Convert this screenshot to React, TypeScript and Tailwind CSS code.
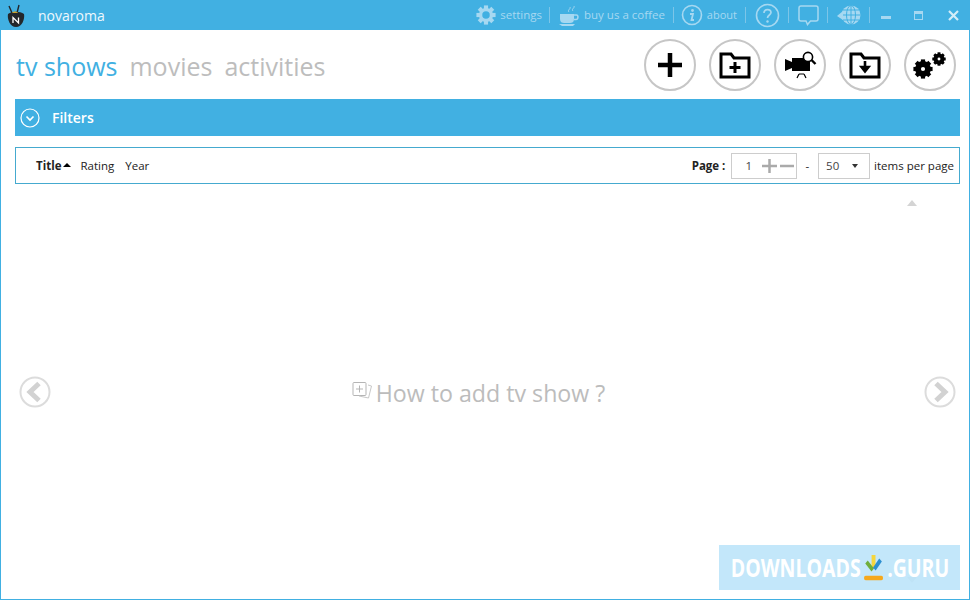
import React from "react";

const font = { fontFamily: '"Open Sans", "Noto Sans", sans-serif' };

const Sep = () => <div className="w-px h-[16px] bg-[#7cc5e8]" />;

const Logo = () => (
	<svg width="20" height="24" viewBox="0 0 20 24">
		<path d="M6 9 L3 2 M11 9 L13 1" stroke="#23272b" strokeWidth="1.4" fill="none" />
		<path d="M2 10 C6 7 14 7 18 10 C19 15 16 23 10 23 C4 23 1 15 2 10 Z" fill="#23272b" />
		<path d="M6 9 C7 7 11 7 12 9 Z" fill="#c7a12e" />
		<path d="M7 19 V13.5 L12.5 19 V13.5" stroke="#fff" strokeWidth="1.3" fill="none" />
	</svg>
);

const Gear = ({ size, color, solid }: { size: number; color: string; solid?: boolean }) => (
	<svg width={size} height={size} viewBox="0 0 24 24">
		<circle cx="12" cy="12" r={solid ? 6 : 6.5} fill="none" stroke={color} strokeWidth={solid ? 7 : 4} />
		{[0, 45, 90, 135, 180, 225, 270, 315].map((a) => (
			<rect key={a} x="9.5" y="0.5" width="5" height="5" fill={color} transform={`rotate(${a} 12 12)`} />
		))}
	</svg>
);

const Coffee = () => (
	<svg width="22" height="24" viewBox="0 0 22 24" fill="none">
		<path d="M1 11 H15 V16 C15 19 13 20 11 20 H5 C3 20 1 19 1 16 Z" fill="#a6d8f1" />
		<path d="M15 12 H17.5 C19.5 12 19.5 16.5 17 16.5 H15" stroke="#a6d8f1" strokeWidth="1.5" />
		<path d="M0 21 H16 L14 23 H3 Z" fill="#a6d8f1" />
		<path d="M10 9 C8 7 12 6 11 4 M14 8 C12 6 16 5 15 3" stroke="#a6d8f1" strokeWidth="1" />
	</svg>
);

const Info = () => (
	<svg width="22" height="22" viewBox="0 0 22 22" fill="none">
		<circle cx="11" cy="11" r="9.5" stroke="#a6d8f1" strokeWidth="1.6" />
		<circle cx="11.5" cy="6.5" r="1.4" fill="#a6d8f1" />
		<path d="M9 10 H12 L10.5 16 H13" stroke="#a6d8f1" strokeWidth="1.8" />
	</svg>
);

const Question = () => (
	<svg width="25" height="25" viewBox="0 0 25 25" fill="none">
		<circle cx="12.5" cy="12.5" r="11" stroke="#a6d8f1" strokeWidth="1.6" />
		<path d="M9 10 C9 5.5 16 5.5 16 9.5 C16 12 12.5 12 12.5 15" stroke="#a6d8f1" strokeWidth="1.7" />
		<circle cx="12.5" cy="18.5" r="1.2" fill="#a6d8f1" />
	</svg>
);

const Chat = () => (
	<svg width="21" height="21" viewBox="0 0 21 21" fill="none">
		<path d="M3 1 H18 C19.2 1 20 1.8 20 3 V14 C20 15.2 19.2 16 18 16 H12.5 L9.5 19.5 L8 16 H3 C1.8 16 1 15.2 1 14 V3 C1 1.8 1.8 1 3 1 Z" stroke="#a6d8f1" strokeWidth="1.5" />
	</svg>
);

const Globe = () => (
	<svg width="24" height="22" viewBox="0 0 24 22" fill="none">
		<circle cx="14" cy="11" r="9.5" fill="#a6d8f1" />
		<path d="M14 1.5 V20.5 M4.5 11 H23.5 M6 6 H22 M6 16 H22" stroke="#41b0e2" strokeWidth="1" />
		<ellipse cx="14" cy="11" rx="4.5" ry="9.5" stroke="#41b0e2" strokeWidth="1" />
		<path d="M0 12 L6 7 V16 Z" fill="#a6d8f1" />
	</svg>
);

const CircleBtn = ({ children }: { children: React.ReactNode }) => (
	<div className="w-[52px] h-[52px] rounded-full border-2 border-[#c6c6c6] flex items-center justify-center">
		{children}
	</div>
);

const FolderIcon = ({ arrow }: { arrow?: boolean }) => (
	<svg width="32" height="28" viewBox="0 0 32 28" fill="none">
		<path d="M2 3 H12 L15 7 H30 V26 H2 Z" stroke="#000" strokeWidth="3" />
		{arrow ? (
			<path d="M16 10 V17 M12.5 16 L16 20.5 L19.5 16 Z" stroke="#000" strokeWidth="2.6" fill="#000" />
		) : (
			<path d="M16 11 V22 M10.5 16.5 H21.5" stroke="#000" strokeWidth="3" />
		)}
	</svg>
);

const CameraIcon = () => (
	<svg width="34" height="30" viewBox="0 0 34 30" fill="none">
		<path d="M2 9 L9 12 V18 L2 21 Z" fill="#000" />
		<rect x="9" y="8" width="18" height="13" fill="#000" />
		<circle cx="25" cy="7" r="4.6" fill="#fff" stroke="#000" strokeWidth="1.6" />
		<path d="M28.5 10 L32.5 14" stroke="#000" strokeWidth="2.4" />
		<path d="M16 24 L14 28 M21 24 L23 28 M16 24 H21" stroke="#000" strokeWidth="1.2" />
	</svg>
);

const GearsIcon = () => (
	<div className="flex items-start -ml-[1px]">
		<div className="mt-[7px]">
			<Gear size={20} color="#000" solid />
		</div>
		<div className="-ml-[1px]">
			<Gear size={14} color="#000" solid />
		</div>
	</div>
);

const Arrow = ({ right }: { right?: boolean }) => (
	<svg width="32" height="32" viewBox="0 0 32 32" fill="none">
		<circle cx="16" cy="16" r="14.5" stroke="#dcdcdc" strokeWidth="2" />
		<path d={right ? "M12 7.5 L21 16 L12 24.5" : "M20 7.5 L11 16 L20 24.5"} stroke="#d2d2d2" strokeWidth="5" />
	</svg>
);

export default function App() {
	return (
		<div
			className="relative w-[970px] h-[600px] flex flex-col bg-white border-x border-b border-[#41b0e2] overflow-hidden"
			style={font}
		>
			{/* title bar */}
			<div className="h-[30px] -mx-px flex items-center bg-[#41b0e2] shrink-0">
				<div className="ml-[6px] w-[20px] mt-[1px]">
					<Logo />
				</div>
				<span className="ml-[12px] text-[14px] text-[#eef8fd]">novaroma</span>
				<div className="ml-auto flex items-center text-[11.5px] text-[#a6d8f1]">
					<Gear size={20} color="#a6d8f1" />
					<span className="ml-[4px]">settings</span>
					<div className="ml-[7px] mr-[9px]">
						<Sep />
					</div>
					<Coffee />
					<span className="ml-[3px]">buy us a coffee</span>
					<div className="ml-[8px] mr-[7px]">
						<Sep />
					</div>
					<Info />
					<span className="ml-[4px] text-[11px]">about</span>
					<div className="ml-[8px] mr-[9px]">
						<Sep />
					</div>
					<Question />
					<div className="ml-[8px] mr-[9px]">
						<Sep />
					</div>
					<Chat />
					<div className="ml-[8px] mr-[9px]">
						<Sep />
					</div>
					<Globe />
					<div className="ml-[8px]">
						<Sep />
					</div>
				</div>
				<div className="w-[100px] flex items-center justify-between pl-[11px] pr-[11px] shrink-0">
					<div className="w-[10px] h-[3px] mt-[4px] bg-[#a6d8f1]" />
					<div className="w-[9px] h-[9px] border border-t-[3px] border-[#a6d8f1] -ml-[3px]" />
					<svg width="11" height="11" viewBox="0 0 11 11">
						<path d="M1 1 L10 10 M10 1 L1 10" stroke="#d3ecf8" strokeWidth="2.2" />
					</svg>
				</div>
			</div>

			{/* tabs and actions */}
			<div className="h-[69px] shrink-0 flex items-center pl-[15px] pr-[13px]">
				<div className="flex items-center gap-[12px] text-[25px] text-[#bdbdbd] mt-[4px]">
					<span className="text-[#41b0e2]">tv shows</span>
					<span>movies</span>
					<span>activities</span>
				</div>
				<div className="ml-auto flex items-center gap-[13px] mt-[1px]">
					<CircleBtn>
						<svg width="26" height="26" viewBox="0 0 26 26">
							<path d="M13 1 V25 M1 13 H25" stroke="#000" strokeWidth="4.5" />
						</svg>
					</CircleBtn>
					<CircleBtn>
						<FolderIcon />
					</CircleBtn>
					<CircleBtn>
						<CameraIcon />
					</CircleBtn>
					<CircleBtn>
						<FolderIcon arrow />
					</CircleBtn>
					<CircleBtn>
						<GearsIcon />
					</CircleBtn>
				</div>
			</div>

			{/* filters */}
			<div className="ml-[14px] mr-[9px] h-[37px] shrink-0 flex items-center bg-[#41b0e2]">
				<svg className="ml-[5px]" width="20" height="20" viewBox="0 0 20 20" fill="none">
					<circle cx="10" cy="10" r="9" stroke="#fff" strokeWidth="1.2" />
					<path d="M6.5 8.5 L10 12 L13.5 8.5" stroke="#fff" strokeWidth="1.6" />
				</svg>
				<span className="ml-[12px] text-[14px] font-semibold text-white">Filters</span>
			</div>

			{/* sort and paging */}
			<div className="ml-[14px] mr-[9px] mt-[11px] h-[37px] shrink-0 p-px bg-[#45aacf]">
				<div className="h-full flex items-center bg-white text-[11.5px] text-[#222]">
					<span className="ml-[20px] font-bold">Title</span>
					<span className="ml-[2px] mb-[2px] w-0 h-0 border-x-[4px] border-x-transparent border-b-[4px] border-b-black" />
					<span className="ml-[9px]">Rating</span>
					<span className="ml-[11px]">Year</span>
					<span className="ml-auto font-bold">Page :</span>
					<div className="ml-[6px] w-[66px] h-[26px] flex items-center border border-[#cdcdcd] text-[#444]">
						<span className="ml-[13px]">1</span>
						<svg className="ml-[10px]" width="32" height="14" viewBox="0 0 32 14">
							<path d="M7.5 0 V14 M0 7 H15 M18 7 H32" stroke="#aaaaaa" strokeWidth="2.5" />
						</svg>
					</div>
					<span className="ml-[8px]">-</span>
					<div className="ml-[9px] w-[52px] h-[26px] flex items-center border border-[#cdcdcd] text-[#444]">
						<span className="ml-[7px]">50</span>
						<span className="ml-[13px] w-0 h-0 border-x-[3.5px] border-x-transparent border-t-[4px] border-t-[#333]" />
					</div>
					<span className="ml-[4px] mr-[5px]">items per page</span>
				</div>
			</div>

			{/* list area */}
			<div className="flex-1 flex flex-col">
				<div className="flex justify-end pr-[52px] pt-[16px]">
					<span className="w-0 h-0 border-x-[5px] border-x-transparent border-b-[6px] border-b-[#d4d4d4]" />
				</div>
				<div className="flex-1 flex items-center justify-between pl-[18px] pr-[13px]">
					<Arrow />
					<div className="flex items-center -ml-[18px] mt-[4px] text-[23.2px] text-[#bcbcbc]">
						<svg className="mr-[3px] -mt-[4px]" width="21" height="21" viewBox="0 0 21 21" fill="none">
							<rect x="1" y="1.5" width="13" height="13" rx="1" stroke="#b5b5b5" strokeWidth="1" />
							<path d="M7.5 4.5 V11.5 M4 8 H11" stroke="#b5b5b5" strokeWidth="1" />
							<path d="M16 4 L19.5 5 L16.5 17 L7 15" stroke="#c8c8c8" strokeWidth="1" />
						</svg>
						<span>How to add tv show ?</span>
					</div>
					<Arrow right />
				</div>
				<div className="flex justify-end pr-[52px] pb-[16px]">
					<span className="w-0 h-0 border-x-[5px] border-x-transparent border-t-[6px] border-t-[#d4d4d4]" />
				</div>
			</div>

			{/* watermark */}
			<div className="absolute left-[718px] top-[545px] w-[241px] h-[45px] flex items-center justify-center bg-[#bde4fa]/90 text-[25px] font-bold text-white" style={{ fontFamily: '"Open Sans", sans-serif' }}>
				<span className="scale-x-[0.78] flex items-center whitespace-nowrap">
					DOWNLOADS
					<svg className="mx-[4px]" width="26" height="28" viewBox="0 0 26 28" fill="none">
						<path d="M13 1 V14" stroke="#f5d63d" strokeWidth="5" />
						<path d="M4 8 L12 16" stroke="#6fae3a" strokeWidth="4.5" />
						<path d="M22 6 L14 15" stroke="#2d8fd0" strokeWidth="4.5" />
						<path d="M3 24 H23" stroke="#f5a81c" strokeWidth="4.5" strokeLinecap="round" />
					</svg>
					.GURU
				</span>
			</div>
		</div>
	);
}
